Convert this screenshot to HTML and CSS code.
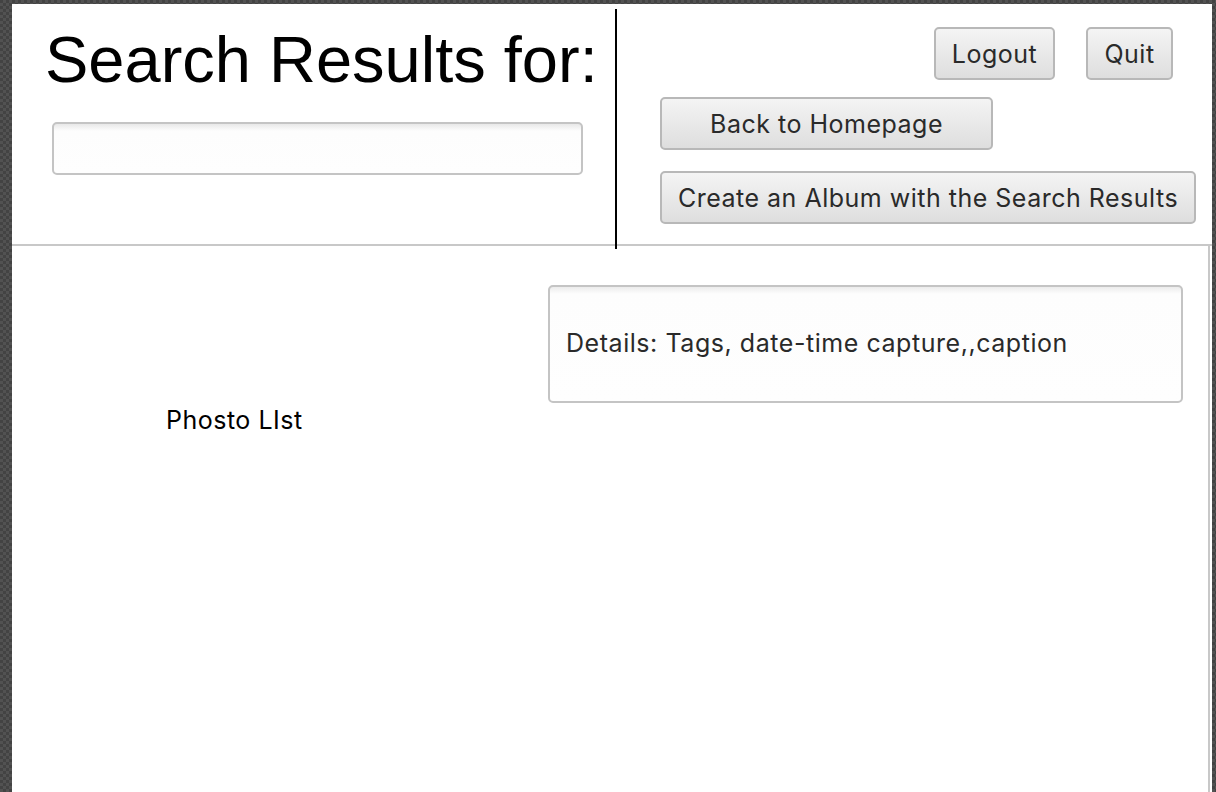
FILE: index.html
```html
<!DOCTYPE html>
<html>
<head>
<meta charset="utf-8">
<title>Search Results</title>
<link rel="stylesheet" href="styles.css">
</head>
<body>
<div class="window">
  <div class="header">
    <div class="left">
      <h1 class="title">Search Results for:</h1>
      <div class="field"></div>
    </div>
    <div class="divider"></div>
    <div class="right">
      <div class="row top-row">
        <button class="btn btn-logout">Logout</button>
        <button class="btn btn-quit">Quit</button>
      </div>
      <div class="row">
        <button class="btn btn-back">Back to Homepage</button>
      </div>
      <div class="row">
        <button class="btn btn-create">Create an Album with the Search Results</button>
      </div>
    </div>
  </div>
  <div class="content">
    <div class="list-pane">
      <div class="list-label">Phosto LIst</div>
    </div>
    <div class="details-pane">
      <div class="details">Details: Tags, date-time capture,,caption</div>
    </div>
  </div>
</div>
</body>
</html>
```
FILE: styles.css
```css
html, body {
  margin: 0;
  padding: 0;
  height: 100%;
}
body {
  background-color: #454545;
  background-image: repeating-conic-gradient(#525252 0 25%, #434343 0 50%);
  background-size: 6px 6px;
  overflow: hidden;
  font-family: Inter, "Liberation Sans", sans-serif;
}
.window {
  margin: 4px 4px 0 12px;
  height: 788px;
  background: #fff;
  display: flex;
  flex-direction: column;
}
.header {
  height: 240px;
  display: flex;
  border-bottom: 2px solid #c8c8c8;
  position: relative;
}
.left {
  width: 603px;
  flex: none;
}
.title {
  margin: 19px 0 0 33px;
  font-family: "Liberation Sans", Arial, sans-serif;
  font-weight: normal;
  font-size: 65px;
  line-height: 74px;
  color: #000;
  white-space: nowrap;
}
.field {
  margin: 25px 0 0 40px;
  width: 527px;
  height: 49px;
  border: 2px solid #c4c4c4;
  border-radius: 5px;
  background: linear-gradient(#e8e8e8 0, #fdfdfd 7px, #fefefe 100%);
}
.divider {
  flex: none;
  width: 2px;
  background: #000;
  margin-top: 5px;
  margin-bottom: -5px;
  position: relative;
  z-index: 1;
}
.right {
  flex: 1;
  display: flex;
  flex-direction: column;
  padding-left: 43px;
}
.row {
  display: flex;
}
.top-row {
  margin-top: 23px;
  justify-content: flex-start;
  padding-left: 274px;
  gap: 31px;
}
.btn {
  font-family: Inter, "Liberation Sans", sans-serif;
  font-size: 25px;
  letter-spacing: 0.5px;
  color: #2a2a2a;
  height: 53px;
  border: 2px solid #b8b8b8;
  border-radius: 5px;
  background: linear-gradient(#f4f4f4, #dedede);
  padding: 0;
  box-sizing: border-box;
  white-space: nowrap;
}
.btn-logout { width: 121px; }
.btn-quit { width: 87px; }
.btn-back {
  width: 333px;
  margin-top: 17px;
}
.btn-create {
  width: 536px;
  margin-top: 21px;
}
.content {
  flex: 1;
  display: flex;
  margin-right: 2px;
  border-right: 2px solid #c8c8c8;
}
.list-pane {
  width: 536px;
  flex: none;
}
.list-label {
  margin: 159px 0 0 154px;
  font-size: 25px;
  letter-spacing: 0.5px;
  color: #000;
}
.details-pane {
  flex: 1;
  padding-top: 39px;
}
.details {
  width: 635px;
  height: 118px;
  box-sizing: border-box;
  border: 2px solid #c4c4c4;
  border-radius: 5px;
  background: linear-gradient(#ececec 0, #fdfdfd 7px, #fefefe 100%);
  display: flex;
  align-items: center;
  padding-left: 16px;
  padding-bottom: 2px;
  font-size: 25px;
  letter-spacing: 0.55px;
  color: #2a2a2a;
}
```
